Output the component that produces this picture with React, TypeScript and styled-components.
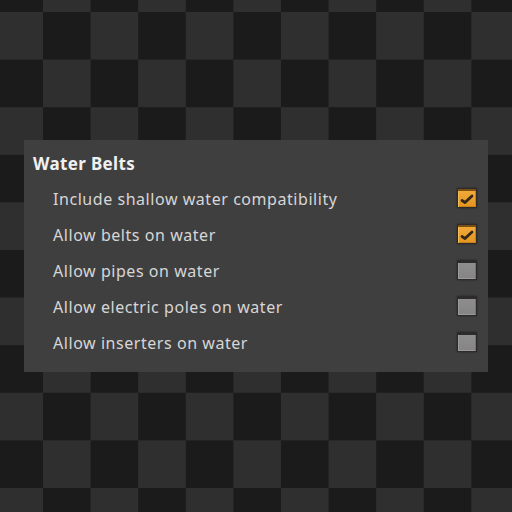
import React from "react";
import styled, { createGlobalStyle } from "styled-components";

const Global = createGlobalStyle`
  html, body { margin: 0; padding: 0; background: #1b1b1b; }
  * { box-sizing: border-box; }
`;

const Page = styled.div`
  width: 512px;
  height: 512px;
  overflow: hidden;
  padding: 140px 24px 0 24px;
  background-color: #1b1b1b;
  background-image: repeating-conic-gradient(#2f2f2f 0 25%, #1b1b1b 0 50%);
  background-size: 95.2px 95.2px;
  background-position: -4.6px -35.6px;
`;

const Panel = styled.section`
  width: 464px;
  height: 232px;
  background: #403f40;
  padding: 12px 11px 12px 9px;
  display: flex;
  flex-direction: column;
  font-family: "Noto Sans", "Open Sans", sans-serif;
`;

const Title = styled.h2`
  margin: 0 0 4px 0;
  height: 24px;
  line-height: 24px;
  font-size: 17px;
  font-weight: 700;
  letter-spacing: 0.35px;
  color: #f0f0f0;
`;

const List = styled.div`
  display: flex;
  flex-direction: column;
  padding-left: 20px;
`;

const Row = styled.label`
  height: 36px;
  display: flex;
  align-items: center;
  justify-content: space-between;
`;

const Label = styled.span`
  font-size: 16px;
  color: #d6d6d6;
  letter-spacing: 0.55px;
  margin-top: 2px;
`;

const Box = styled.span`
  width: 20px;
  height: 20px;
  display: flex;
  align-items: center;
  justify-content: center;
  background: #2e2a2a;
  border-radius: 1px;
  box-shadow: 0 0 2px rgba(0, 0, 0, 0.5);
`;

const Inner = styled.span<{ $checked: boolean }>`
  width: 18px;
  height: 18px;
  display: flex;
  align-items: center;
  justify-content: center;
  border-top: 2px solid ${(p) => (p.$checked ? "#7a4f12" : "#2c2c2c")};
  background: ${(p) =>
    p.$checked
      ? "linear-gradient(#f2a93a, #e3951f)"
      : "linear-gradient(#8e8e8e, #848484)"};
  box-shadow: ${(p) =>
    p.$checked
      ? "inset 1px 0 0 #f7bd55, inset -1px 0 0 #c98016, inset 0 -1px 0 #c98016"
      : "inset 1px 0 0 #9c9c9c, inset -1px 0 0 #747474, inset 0 -1px 0 #9a9a9a"};
`;

const Check = () => (
  <svg width="14" height="12" viewBox="0 0 14 12" style={{ marginTop: -1 }}>
    <path
      d="M2 7.5 L5 9.5 L12 3"
      fill="none"
      stroke="#33271a"
      strokeWidth="2.8"
      strokeLinecap="round"
      strokeLinejoin="round"
    />
  </svg>
);

const items = [
  { label: "Include shallow water compatibility", checked: true },
  { label: "Allow belts on water", checked: true },
  { label: "Allow pipes on water", checked: false },
  { label: "Allow electric poles on water", checked: false },
  { label: "Allow inserters on water", checked: false },
];

export default function App() {
  return (
    <>
      <Global />
      <Page>
        <Panel>
          <Title>Water Belts</Title>
          <List>
            {items.map((it) => (
              <Row key={it.label}>
                <Label>{it.label}</Label>
                <Box>
                  <Inner $checked={it.checked}>{it.checked && <Check />}</Inner>
                </Box>
              </Row>
            ))}
          </List>
        </Panel>
      </Page>
    </>
  );
}
